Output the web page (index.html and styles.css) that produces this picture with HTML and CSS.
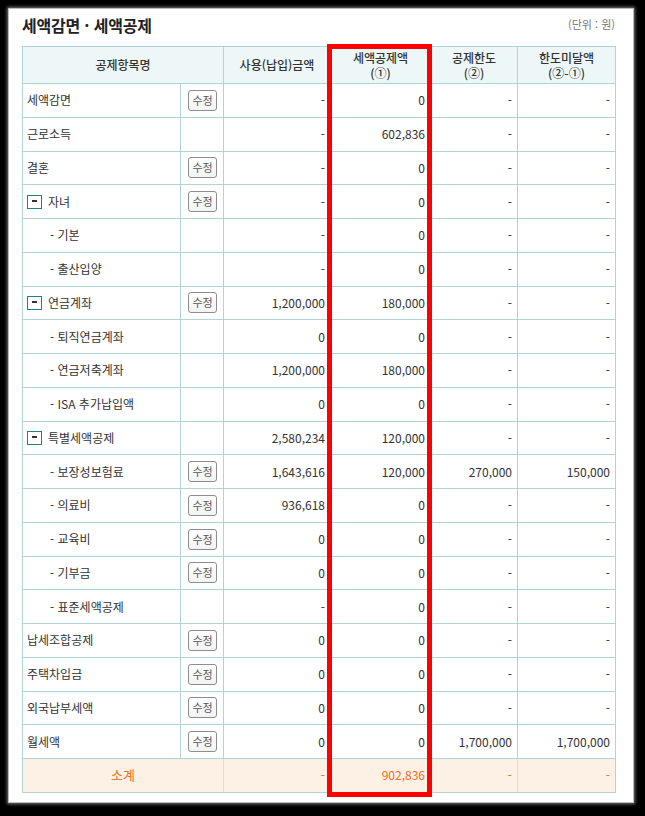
FILE: index.html
```html
<!DOCTYPE html>
<html lang="ko">
<head>
<meta charset="utf-8">
<link rel="stylesheet" href="styles.css">
</head>
<body>
<div class="card">
  <div class="head">
    <h2 class="title">세액감면 · 세액공제</h2>
    <span class="unit">(단위 : 원)</span>
  </div>
  <table class="grid">
    <colgroup>
      <col class="c-name"><col class="c-btn"><col class="c-use"><col class="c-ded"><col class="c-lim"><col class="c-rest">
    </colgroup>
    <thead>
      <tr>
        <th colspan="2">공제항목명</th>
        <th>사용(납입)금액</th>
        <th><span class="hl">세액공제액</span><span class="hl">(①)</span></th>
        <th><span class="hl">공제한도</span><span class="hl">(②)</span></th>
        <th><span class="hl">한도미달액</span><span class="hl">(②-①)</span></th>
      </tr>
    </thead>
    <tbody>
      <tr><td class="name">세액감면</td><td class="btn"><span class="edit">수정</span></td><td class="num">-</td><td class="num">0</td><td class="num">-</td><td class="num">-</td></tr>
      <tr><td class="name">근로소득</td><td class="btn"></td><td class="num">-</td><td class="num">602,836</td><td class="num">-</td><td class="num">-</td></tr>
      <tr><td class="name">결혼</td><td class="btn"><span class="edit">수정</span></td><td class="num">-</td><td class="num">0</td><td class="num">-</td><td class="num">-</td></tr>
      <tr><td class="name"><span class="fold"></span>자녀</td><td class="btn"><span class="edit">수정</span></td><td class="num">-</td><td class="num">0</td><td class="num">-</td><td class="num">-</td></tr>
      <tr><td class="name sub">- 기본</td><td class="btn"></td><td class="num">-</td><td class="num">0</td><td class="num">-</td><td class="num">-</td></tr>
      <tr><td class="name sub">- 출산입양</td><td class="btn"></td><td class="num">-</td><td class="num">0</td><td class="num">-</td><td class="num">-</td></tr>
      <tr><td class="name"><span class="fold"></span>연금계좌</td><td class="btn"><span class="edit">수정</span></td><td class="num">1,200,000</td><td class="num">180,000</td><td class="num">-</td><td class="num">-</td></tr>
      <tr><td class="name sub">- 퇴직연금계좌</td><td class="btn"></td><td class="num">0</td><td class="num">0</td><td class="num">-</td><td class="num">-</td></tr>
      <tr><td class="name sub">- 연금저축계좌</td><td class="btn"></td><td class="num">1,200,000</td><td class="num">180,000</td><td class="num">-</td><td class="num">-</td></tr>
      <tr><td class="name sub">- ISA 추가납입액</td><td class="btn"></td><td class="num">0</td><td class="num">0</td><td class="num">-</td><td class="num">-</td></tr>
      <tr><td class="name"><span class="fold"></span>특별세액공제</td><td class="btn"></td><td class="num">2,580,234</td><td class="num">120,000</td><td class="num">-</td><td class="num">-</td></tr>
      <tr><td class="name sub">- 보장성보험료</td><td class="btn"><span class="edit">수정</span></td><td class="num">1,643,616</td><td class="num">120,000</td><td class="num">270,000</td><td class="num">150,000</td></tr>
      <tr><td class="name sub">- 의료비</td><td class="btn"><span class="edit">수정</span></td><td class="num">936,618</td><td class="num">0</td><td class="num">-</td><td class="num">-</td></tr>
      <tr><td class="name sub">- 교육비</td><td class="btn"><span class="edit">수정</span></td><td class="num">0</td><td class="num">0</td><td class="num">-</td><td class="num">-</td></tr>
      <tr><td class="name sub">- 기부금</td><td class="btn"><span class="edit">수정</span></td><td class="num">0</td><td class="num">0</td><td class="num">-</td><td class="num">-</td></tr>
      <tr><td class="name sub">- 표준세액공제</td><td class="btn"></td><td class="num">-</td><td class="num">0</td><td class="num">-</td><td class="num">-</td></tr>
      <tr><td class="name">납세조합공제</td><td class="btn"><span class="edit">수정</span></td><td class="num">0</td><td class="num">0</td><td class="num">-</td><td class="num">-</td></tr>
      <tr><td class="name">주택차입금</td><td class="btn"><span class="edit">수정</span></td><td class="num">0</td><td class="num">0</td><td class="num">-</td><td class="num">-</td></tr>
      <tr><td class="name">외국납부세액</td><td class="btn"><span class="edit">수정</span></td><td class="num">0</td><td class="num">0</td><td class="num">-</td><td class="num">-</td></tr>
      <tr><td class="name">월세액</td><td class="btn"><span class="edit">수정</span></td><td class="num">0</td><td class="num">0</td><td class="num">1,700,000</td><td class="num">1,700,000</td></tr>
      <tr class="total"><td colspan="2" class="label">소계</td><td class="num">-</td><td class="num">902,836</td><td class="num">-</td><td class="num">-</td></tr>
    </tbody>
  </table>
  <div class="highlight"></div>
</div>
</body>
</html>
```
FILE: styles.css
```css
html, body {
  margin: 0;
  padding: 0;
  background: #000;
}
body {
  padding: 9px 12px 14px 9px;
  font-family: "Noto Sans CJK KR", "Noto Sans", sans-serif;
  color: #333;
}
.card {
  position: relative;
  background: #fff;
  height: 793px;
  box-sizing: border-box;
  padding: 5px 18px 0 13px;
  box-shadow: 0 0 0 1px #bbb, 0 0 3px 2px #777;
}
.head {
  display: flex;
  justify-content: space-between;
  align-items: flex-start;
  height: 22px;
  margin-bottom: 10px;
}
.title {
  margin: 0;
  font-size: 16px;
  font-weight: 700;
  line-height: 22px;
  color: #222;
  letter-spacing: -0.2px;
}
.unit {
  font-size: 11px;
  color: #777;
  line-height: 14px;
  margin-top: 3px;
}
.grid {
  width: 593px;
  border-collapse: collapse;
  table-layout: fixed;
  font-size: 12px;
}
.c-name { width: 158px; }
.c-btn { width: 43px; }
.c-use { width: 107px; }
.c-ded { width: 100px; }
.c-lim { width: 87px; }
.c-rest { width: 98px; }
.grid th, .grid td {
  border: 1px solid #b3d3d6;
  padding: 0;
}
.grid th {
  background: #eef7f7;
  height: 36px;
  font-weight: 500;
  font-size: 12px;
  line-height: 14px;
  color: #333;
  text-align: center;
}
.hl {
  display: block;
  height: 15px;
  line-height: 15px;
}
.grid tbody tr { height: 33.76px; }
.grid td {
  line-height: 16px;
  vertical-align: middle;
}
.name {
  padding-left: 4px !important;
  white-space: nowrap;
}
.name.sub { padding-left: 27px !important; }
.fold {
  display: inline-block;
  box-sizing: border-box;
  width: 15px;
  height: 14px;
  border: 1.5px solid #237f8e;
  vertical-align: -2px;
  margin-right: 6px;
  position: relative;
}
.fold::after {
  content: "";
  position: absolute;
  left: 3.5px;
  top: 4.5px;
  width: 5px;
  height: 1.5px;
  background: #333;
}
.btn { text-align: center; }
.edit {
  display: inline-block;
  box-sizing: border-box;
  width: 29px;
  height: 21px;
  line-height: 19px;
  border: 1px solid #8d8d8d;
  border-radius: 3px;
  background: linear-gradient(#fff, #f3f3f3);
  font-size: 11px;
  color: #555;
  text-align: center;
  vertical-align: middle;
  margin-left: 1px;
}
.num {
  text-align: right;
  padding-right: 5px !important;
}
.total td {
  background: #fdf0e5;
  color: #f26d22;
  border-color: #f4d5c2;
  border-bottom-color: #b3d3d6;
}
.total td:first-child { border-left-color: #b3d3d6; }
.total td:last-child { border-right-color: #b3d3d6; }
.total .label {
  text-align: center;
  font-size: 13px;
}
.highlight {
  position: absolute;
  left: 318px;
  top: 35px;
  width: 105px;
  height: 753px;
  box-sizing: border-box;
  border: 5px solid #ff0000;
  pointer-events: none;
}
```
